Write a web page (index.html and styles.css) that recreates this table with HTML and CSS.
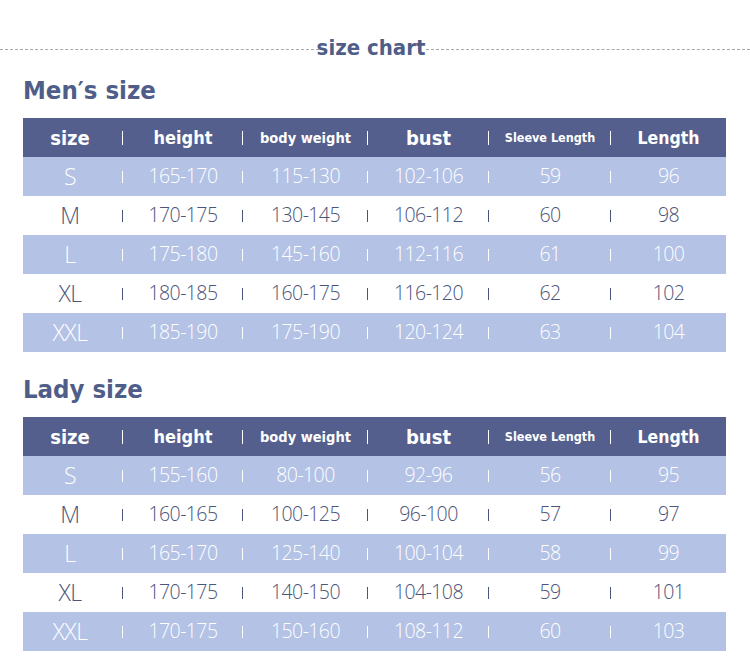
FILE: index.html
```html
<!DOCTYPE html>
<html>
<head>
<meta charset="utf-8">
<link rel="stylesheet" href="styles.css">
</head>
<body>
<div class="page">
  <div class="chart-head">
    <span class="dash"></span>
    <span class="chart-title">size chart</span>
    <span class="dash"></span>
  </div>

  <h2 class="section-title">Men′s size</h2>
  <div class="table">
    <div class="row head">
      <div class="cell c-size">size</div>
      <div class="cell c-height">height</div>
      <div class="cell c-weight">body weight</div>
      <div class="cell c-bust">bust</div>
      <div class="cell c-sleeve">Sleeve Length</div>
      <div class="cell c-len">Length</div>
    </div>
    <div class="row tint">
      <div class="cell sz">S</div><div class="cell">165-170</div><div class="cell">115-130</div><div class="cell">102-106</div><div class="cell">59</div><div class="cell">96</div>
    </div>
    <div class="row plain">
      <div class="cell sz">M</div><div class="cell">170-175</div><div class="cell">130-145</div><div class="cell">106-112</div><div class="cell">60</div><div class="cell">98</div>
    </div>
    <div class="row tint">
      <div class="cell sz">L</div><div class="cell">175-180</div><div class="cell">145-160</div><div class="cell">112-116</div><div class="cell">61</div><div class="cell">100</div>
    </div>
    <div class="row plain">
      <div class="cell sz">XL</div><div class="cell">180-185</div><div class="cell">160-175</div><div class="cell">116-120</div><div class="cell">62</div><div class="cell">102</div>
    </div>
    <div class="row tint">
      <div class="cell sz">XXL</div><div class="cell">185-190</div><div class="cell">175-190</div><div class="cell">120-124</div><div class="cell">63</div><div class="cell">104</div>
    </div>
  </div>

  <h2 class="section-title lady">Lady size</h2>
  <div class="table">
    <div class="row head">
      <div class="cell c-size">size</div>
      <div class="cell c-height">height</div>
      <div class="cell c-weight">body weight</div>
      <div class="cell c-bust">bust</div>
      <div class="cell c-sleeve">Sleeve Length</div>
      <div class="cell c-len">Length</div>
    </div>
    <div class="row tint">
      <div class="cell sz">S</div><div class="cell">155-160</div><div class="cell">80-100</div><div class="cell">92-96</div><div class="cell">56</div><div class="cell">95</div>
    </div>
    <div class="row plain">
      <div class="cell sz">M</div><div class="cell">160-165</div><div class="cell">100-125</div><div class="cell">96-100</div><div class="cell">57</div><div class="cell">97</div>
    </div>
    <div class="row tint">
      <div class="cell sz">L</div><div class="cell">165-170</div><div class="cell">125-140</div><div class="cell">100-104</div><div class="cell">58</div><div class="cell">99</div>
    </div>
    <div class="row plain">
      <div class="cell sz">XL</div><div class="cell">170-175</div><div class="cell">140-150</div><div class="cell">104-108</div><div class="cell">59</div><div class="cell">101</div>
    </div>
    <div class="row tint">
      <div class="cell sz">XXL</div><div class="cell">170-175</div><div class="cell">150-160</div><div class="cell">108-112</div><div class="cell">60</div><div class="cell">103</div>
    </div>
  </div>
</div>
</body>
</html>
```

FILE: styles.css
```css
html, body {
  margin: 0;
  padding: 0;
  background: #ffffff;
}

.page {
  width: 750px;
  height: 668px;
  overflow: hidden;
  padding-top: 35px;
  box-sizing: border-box;
}

.chart-head {
  display: flex;
  align-items: center;
  height: 26px;
}

.dash {
  flex: 1;
  height: 0;
  border-top: 1px dashed #a8a8a8;
  margin-top: 2px;
}

.chart-title {
  font-family: "DejaVu Sans", sans-serif;
  font-stretch: condensed;
  font-weight: bold;
  font-size: 22px;
  line-height: 26px;
  color: #4f5d89;
  padding: 0 1px;
  margin-left: -8px;
}

.section-title {
  margin: 14px 0 0 23px;
  font-family: "DejaVu Sans", sans-serif;
  font-stretch: condensed;
  font-weight: bold;
  font-size: 25.5px;
  line-height: 30px;
  height: 43px;
  color: #4f5d89;
}

.section-title.lady {
  margin-top: 22px;
}

.table {
  margin-left: 23px;
  width: 703px;
}

.row {
  display: grid;
  grid-template-columns: 100px 120px 125px 121px 122px 115px;
  height: 39px;
  align-items: center;
}

.row.head {
  background: #545f8d;
  color: #ffffff;
  font-family: "DejaVu Sans", sans-serif;
  font-weight: bold;
  font-stretch: condensed;
  --sep: #ffffff;
}

.row.tint {
  background: #b3c2e5;
  color: #ffffff;
  --sep: #ffffff;
}

.row.plain {
  background: #ffffff;
  color: #4b5479;
  --sep: #4b5479;
}

.row.tint, .row.plain {
  font-family: "Open Sans", sans-serif;
  font-weight: 300;
  font-size: 19.5px;
  letter-spacing: -0.6px;
}

.cell {
  height: 100%;
  display: flex;
  align-items: center;
  justify-content: center;
  background-image: linear-gradient(var(--sep), var(--sep));
  background-repeat: no-repeat;
  background-size: 1px 12px;
  background-position: right center;
}

.row.tint .cell, .row.plain .cell {
  padding-bottom: 2px;
  box-sizing: border-box;
}

.row.head .cell {
  background-size: 1px 14px;
}

.cell:last-child {
  background-image: none;
}

.cell.sz {
  font-size: 23px;
  letter-spacing: -0.5px;
  padding-right: 6px;
}

.c-size { font-size: 20px; padding-right: 6px; box-sizing: border-box; }
.c-height { font-size: 18px; }
.c-weight { font-size: 14.5px; }
.c-bust { font-size: 20px; }
.c-sleeve { font-size: 12.5px; }
.c-len { font-size: 17.5px; }
```
